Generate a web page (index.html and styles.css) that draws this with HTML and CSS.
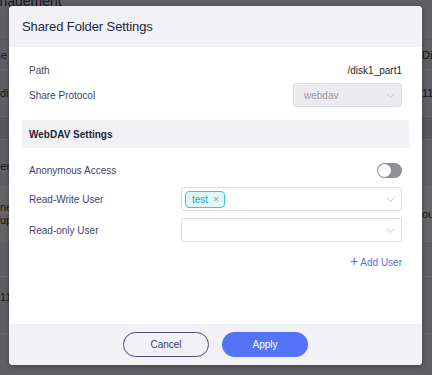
FILE: index.html
```html
<!DOCTYPE html>
<html lang="en">
<head>
    <meta charset="UTF-8">
    <meta name="viewport" content="width=device-width, initial-scale=1.0">
    <title>Shared Folder Settings</title>
    <link rel="stylesheet" href="styles.css">
</head>
<body>
    <!-- page behind the dialog (dimmed) -->
    <div class="page">
        <div class="page-title">Management</div>
        <div class="page-row head">
            <div class="cell-l end"><span>Name</span></div>
            <div class="cell-r">Disk</div>
        </div>
        <div class="page-row tall">
            <div class="cell-l"><span>di</span></div>
            <div class="cell-r">113</div>
        </div>
        <div class="page-row band"></div>
        <div class="page-row tall low">
            <div class="cell-l shift"><span>Serv</span></div>
            <div class="cell-r"></div>
        </div>
        <div class="page-row light">
            <div class="cell-l two"><span>ne<br>up</span></div>
            <div class="cell-r">ou</div>
        </div>
        <div class="page-row mid"></div>
        <div class="page-row last">
            <div class="cell-l"><span>11</span></div>
            <div class="cell-r"></div>
        </div>
        <div class="page-foot"></div>
    </div>

    <div class="modal">
        <div class="modal-header">Shared Folder Settings</div>
        <div class="modal-body">
            <div class="row row-path">
                <span class="label">Path</span>
                <span class="value">/disk1_part1</span>
            </div>
            <div class="row row-protocol">
                <span class="label">Share Protocol</span>
                <div class="select disabled">
                    <span>webdav</span>
                    <svg class="chevron" width="9" height="5" viewBox="0 0 9 5"><path d="M0.5 0.5 L4.5 4.5 L8.5 0.5" fill="none" stroke="#c4c4cc" stroke-width="1"/></svg>
                </div>
            </div>

            <div class="section-title">WebDAV Settings</div>

            <div class="row row-anon">
                <span class="label">Anonymous Access</span>
                <div class="toggle"><div class="knob"></div></div>
            </div>
            <div class="row row-field">
                <span class="label">Read-Write User</span>
                <div class="select wide">
                    <span class="tag">test <span class="tag-x">×</span></span>
                    <svg class="chevron" width="9" height="5" viewBox="0 0 9 5"><path d="M0.5 0.5 L4.5 4.5 L8.5 0.5" fill="none" stroke="#c4c4cc" stroke-width="1"/></svg>
                </div>
            </div>
            <div class="row row-field">
                <span class="label">Read-only User</span>
                <div class="select wide">
                    <span></span>
                    <svg class="chevron" width="9" height="5" viewBox="0 0 9 5"><path d="M0.5 0.5 L4.5 4.5 L8.5 0.5" fill="none" stroke="#c4c4cc" stroke-width="1"/></svg>
                </div>
            </div>
            <div class="row row-add">
                <span class="add-user"><span class="plus">+</span> Add User</span>
            </div>
        </div>
        <div class="modal-footer">
            <button class="btn btn-cancel">Cancel</button>
            <button class="btn btn-apply">Apply</button>
        </div>
    </div>
</body>
</html>
```
FILE: styles.css
```css
body {
    margin: 0;
    width: 432px;
    height: 375px;
    overflow: hidden;
    position: relative;
    font-family: "Liberation Sans", Arial, sans-serif;
    background-color: #5f5e63;
}
.page {
    display: flex;
    flex-direction: column;
    color: #18181f;
    font-size: 11px;
}
.page-title {
    height: 45px;
    font-size: 14px;
    line-height: 14px;
    margin-top: -6px;
    margin-left: -20px;
    border-bottom: 1px solid #58575c;
}
.page-row {
    display: flex;
    justify-content: space-between;
    align-items: center;
    border-bottom: 1px solid #69686d;
    white-space: nowrap;
}
.page-row.head {
    height: 29px;
}
.page-row.tall {
    height: 46px;
}
.page-row.low {
    padding-top: 6px;
    height: 40px;
}
.page-row.band {
    height: 22px;
    background-color: #57565b;
}
.page-row.light {
    height: 54px;
    background-color: #646368;
}
.page-row.mid {
    height: 34px;
}
.page-row.last {
    height: 56px;
    align-items: flex-start;
}
.page-row.last .cell-l {
    margin-top: 14px;
}
.page-foot {
    flex: 1;
    background-color: #515055;
}
.cell-l {
    width: 9px;
    display: flex;
}
.cell-l.end {
    width: 7px;
    justify-content: flex-end;
}
.cell-l.shift span {
    margin-left: -7px;
}
.cell-l.two {
    line-height: 13px;
}
.cell-r {
    width: 10px;
}

.modal {
    position: absolute;
    left: 9px;
    top: 6px;
    width: 413px;
    height: 359px;
    background-color: #ffffff;
    border-radius: 4px;
    overflow: hidden;
    display: flex;
    flex-direction: column;
    box-shadow: 0 1px 4px rgba(0, 0, 0, 0.35);
}
.modal-header {
    height: 41px;
    background-color: #f2f2f6;
    display: flex;
    align-items: center;
    padding-left: 13px;
    font-size: 13px;
    letter-spacing: -0.1px;
    color: #25253a;
}
.modal-body {
    flex: 1;
    padding: 14px 13px 0;
    display: flex;
    flex-direction: column;
}
.row {
    display: flex;
    align-items: center;
    padding: 0 7px;
    font-size: 10px;
    color: #3f3f6e;
}
.label {
    width: 152px;
}
.row-path {
    height: 18px;
    justify-content: space-between;
}
.value {
    color: #1e1e2a;
}
.row-protocol {
    height: 24px;
    margin-top: 4px;
    justify-content: space-between;
}
.select {
    height: 22px;
    border: 1px solid #dcdce2;
    border-radius: 3px;
    display: flex;
    align-items: center;
    justify-content: space-between;
    padding: 0 6px 0 3px;
    box-sizing: border-box;
}
.select.disabled {
    width: 109px;
    height: 24px;
    background-color: #ececf0;
    color: #9a9aa3;
    padding-left: 10px;
}
.select.wide {
    flex: 1;
    height: 24px;
}
.section-title {
    margin-top: 13px;
    height: 28px;
    background-color: #f1f1f5;
    border-radius: 3px;
    display: flex;
    align-items: center;
    padding-left: 7px;
    font-size: 10px;
    font-weight: bold;
    color: #25253a;
}
.row-anon {
    height: 20px;
    margin-top: 12px;
    justify-content: space-between;
}
.toggle {
    width: 25px;
    height: 15px;
    border-radius: 8px;
    background-color: #8f8f94;
    display: flex;
    align-items: center;
    padding-left: 1px;
    box-sizing: border-box;
}
.knob {
    width: 13px;
    height: 13px;
    border-radius: 50%;
    background-color: #ffffff;
}
.row-field {
    height: 24px;
    margin-top: 7px;
}
.tag {
    height: 17px;
    box-sizing: border-box;
    padding: 0 5px 0 6px;
    border: 1px solid #3fc6dc;
    border-radius: 4px;
    background-color: #e2f7fb;
    color: #1ba8c4;
    font-size: 10px;
    display: flex;
    align-items: center;
}
.tag-x {
    color: #9a9aa3;
    margin-left: 5px;
    font-size: 10px;
}
.row-add {
    height: 16px;
    margin-top: 12px;
    justify-content: flex-end;
}
.add-user {
    color: #5470f0;
    font-size: 10px;
}
.plus {
    font-size: 14px;
    line-height: 10px;
}
.modal-footer {
    height: 41px;
    background-color: #f2f2f6;
    display: flex;
    justify-content: center;
    align-items: center;
    gap: 13px;
}
.btn {
    width: 86px;
    height: 25px;
    border-radius: 13px;
    font-family: "Liberation Sans", Arial, sans-serif;
    font-size: 10px;
    cursor: pointer;
}
.btn-cancel {
    background-color: #f2f2f6;
    border: 1px solid #4a4a7c;
    color: #3c3c68;
}
.btn-apply {
    background-color: #5374f6;
    border: none;
    color: #ffffff;
}
```
